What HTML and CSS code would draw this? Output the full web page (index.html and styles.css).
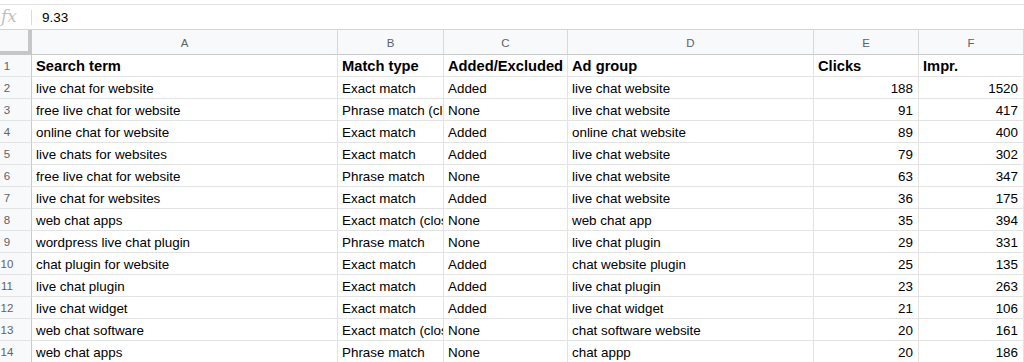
FILE: index.html
```html
<!DOCTYPE html>
<html lang="en">
<head>
  <meta charset="UTF-8" />
  <title>Search terms</title>
  <link rel="stylesheet" href="styles.css">
</head>
<body>
  <div class="formula-bar">
    <span class="fx">fx</span>
    <span class="fx-sep"></span>
    <span class="fx-value">9.33</span>
  </div>

  <div class="sheet">
    <div class="row head-row">
      <div class="corner"></div>
      <div class="col-head">A</div>
      <div class="col-head">B</div>
      <div class="col-head">C</div>
      <div class="col-head">D</div>
      <div class="col-head">E</div>
      <div class="col-head">F</div>
    </div>

    <div class="row bold">
      <div class="num">1</div>
      <div class="cell">Search term</div>
      <div class="cell">Match type</div>
      <div class="cell">Added/Excluded</div>
      <div class="cell">Ad group</div>
      <div class="cell">Clicks</div>
      <div class="cell">Impr.</div>
    </div>
    <div class="row">
      <div class="num">2</div>
      <div class="cell">live chat for website</div>
      <div class="cell">Exact match</div>
      <div class="cell">Added</div>
      <div class="cell">live chat website</div>
      <div class="cell n">188</div>
      <div class="cell n">1520</div>
    </div>
    <div class="row">
      <div class="num">3</div>
      <div class="cell">free live chat for website</div>
      <div class="cell">Phrase match (close variant)</div>
      <div class="cell">None</div>
      <div class="cell">live chat website</div>
      <div class="cell n">91</div>
      <div class="cell n">417</div>
    </div>
    <div class="row">
      <div class="num">4</div>
      <div class="cell">online chat for website</div>
      <div class="cell">Exact match</div>
      <div class="cell">Added</div>
      <div class="cell">online chat website</div>
      <div class="cell n">89</div>
      <div class="cell n">400</div>
    </div>
    <div class="row">
      <div class="num">5</div>
      <div class="cell">live chats for websites</div>
      <div class="cell">Exact match</div>
      <div class="cell">Added</div>
      <div class="cell">live chat website</div>
      <div class="cell n">79</div>
      <div class="cell n">302</div>
    </div>
    <div class="row">
      <div class="num">6</div>
      <div class="cell">free live chat for website</div>
      <div class="cell">Phrase match</div>
      <div class="cell">None</div>
      <div class="cell">live chat website</div>
      <div class="cell n">63</div>
      <div class="cell n">347</div>
    </div>
    <div class="row">
      <div class="num">7</div>
      <div class="cell">live chat for websites</div>
      <div class="cell">Exact match</div>
      <div class="cell">Added</div>
      <div class="cell">live chat website</div>
      <div class="cell n">36</div>
      <div class="cell n">175</div>
    </div>
    <div class="row">
      <div class="num">8</div>
      <div class="cell">web chat apps</div>
      <div class="cell">Exact match (close variant)</div>
      <div class="cell">None</div>
      <div class="cell">web chat app</div>
      <div class="cell n">35</div>
      <div class="cell n">394</div>
    </div>
    <div class="row">
      <div class="num">9</div>
      <div class="cell">wordpress live chat plugin</div>
      <div class="cell">Phrase match</div>
      <div class="cell">None</div>
      <div class="cell">live chat plugin</div>
      <div class="cell n">29</div>
      <div class="cell n">331</div>
    </div>
    <div class="row">
      <div class="num">10</div>
      <div class="cell">chat plugin for website</div>
      <div class="cell">Exact match</div>
      <div class="cell">Added</div>
      <div class="cell">chat website plugin</div>
      <div class="cell n">25</div>
      <div class="cell n">135</div>
    </div>
    <div class="row">
      <div class="num">11</div>
      <div class="cell">live chat plugin</div>
      <div class="cell">Exact match</div>
      <div class="cell">Added</div>
      <div class="cell">live chat plugin</div>
      <div class="cell n">23</div>
      <div class="cell n">263</div>
    </div>
    <div class="row">
      <div class="num">12</div>
      <div class="cell">live chat widget</div>
      <div class="cell">Exact match</div>
      <div class="cell">Added</div>
      <div class="cell">live chat widget</div>
      <div class="cell n">21</div>
      <div class="cell n">106</div>
    </div>
    <div class="row">
      <div class="num">13</div>
      <div class="cell">web chat software</div>
      <div class="cell">Exact match (close variant)</div>
      <div class="cell">None</div>
      <div class="cell">chat software website</div>
      <div class="cell n">20</div>
      <div class="cell n">161</div>
    </div>
    <div class="row">
      <div class="num">14</div>
      <div class="cell">web chat apps</div>
      <div class="cell">Phrase match</div>
      <div class="cell">None</div>
      <div class="cell">chat appp</div>
      <div class="cell n">20</div>
      <div class="cell n">186</div>
    </div>
  </div>
</body>
</html>
```

FILE: styles.css
```css
* {
  box-sizing: border-box;
}
body {
  margin: 0;
  background: #fff;
  font-family: "Liberation Sans", Arial, sans-serif;
  color: #000;
  overflow: hidden;
}

/* formula bar */
.formula-bar {
  margin-top: 4px;
  height: 26px;
  border-top: 1px solid #e3e3e3;
  border-bottom: 1px solid #d4d4d4;
  display: flex;
  align-items: center;
}
.fx {
  width: 32px;
  font-family: "DejaVu Serif", "Liberation Serif", serif;
  font-style: italic;
  font-size: 17px;
  color: #c0c0c0;
  padding-left: 1px;
  padding-bottom: 2px;
}
.fx-sep {
  width: 1px;
  height: 15px;
  background: #dadada;
  margin-left: -1px;
}
.fx-value {
  margin-left: 10px;
  font-size: 13.5px;
}

/* grid */
.row {
  display: grid;
  grid-template-columns: 32px 306px 106px 124px 246px 105px 105px;
  height: 22px;
}
.head-row {
  height: 25px;
  background: #f8f9fa;
}
.corner {
  border-right: 4px solid #c4c7c8;
  border-bottom: 4px solid #c4c7c8;
}
.col-head {
  border-right: 1px solid #d6d8da;
  border-bottom: 1px solid #c8cacc;
  font-size: 11.5px;
  color: #5f6368;
  display: flex;
  align-items: center;
  justify-content: center;
  padding-top: 1px;
}
.num {
  background: #f8f9fa;
  border-right: 1px solid #c8cacc;
  border-bottom: 1px solid #e2e3e3;
  font-size: 11.5px;
  color: #5f6368;
  width: 32px;
  padding-right: 17px;
  display: flex;
  align-items: center;
  justify-content: center;
}
.cell {
  border-right: 1px solid #e2e3e3;
  border-bottom: 1px solid #e2e3e3;
  font-size: 13.4px;
  line-height: 21px;
  padding: 1px 4px 0 4px;
  white-space: nowrap;
  overflow: hidden;
}
.cell.n {
  text-align: right;
  padding-right: 5px;
}
.bold .cell {
  font-size: 14.7px;
  font-weight: 700;
}
```
